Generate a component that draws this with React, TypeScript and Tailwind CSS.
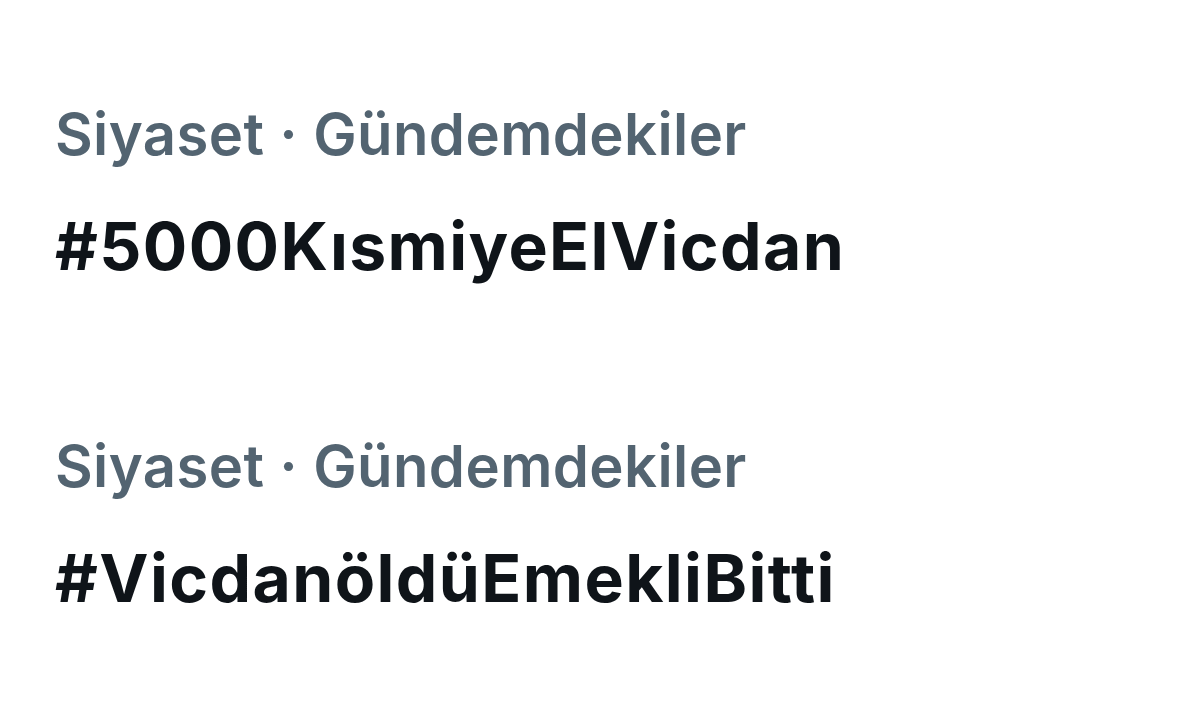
const trends = [
  { context: "Siyaset · Gündemdekiler", tag: "#5000KısmiyeElVicdan" },
  { context: "Siyaset · Gündemdekiler", tag: "#VicdanöldüEmekliBitti" },
];

function TrendItem({ context, tag }: { context: string; tag: string }) {
  return (
    <div className="px-[55px] py-[68px] flex flex-col gap-[28px]">
      <div className="text-[58px] leading-[80px] font-semibold text-[#536471] tracking-[0.4px]">
        {context}
      </div>
      <div className="text-[66px] leading-[88px] font-bold text-[#0f1419] tracking-[1.4px]">
        {tag}
      </div>
    </div>
  );
}

export default function App() {
  return (
    <div
      className="w-[1200px] h-[718px] bg-white overflow-hidden pt-[26px]"
      style={{ fontFamily: "Inter, 'Noto Sans', sans-serif" }}
    >
      {trends.map((t) => (
        <TrendItem key={t.tag} {...t} />
      ))}
    </div>
  );
}
